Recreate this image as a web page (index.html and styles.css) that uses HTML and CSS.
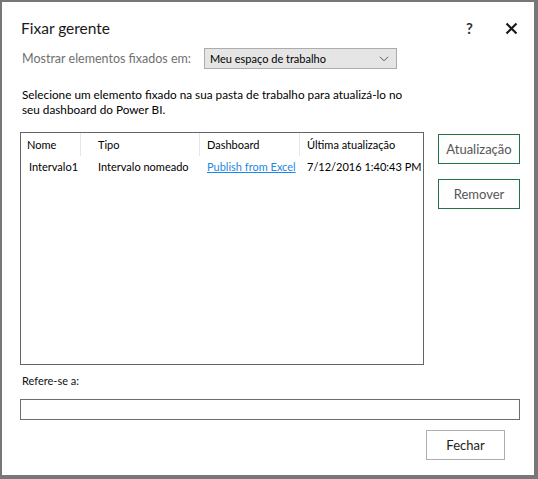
FILE: index.html
```html
<!DOCTYPE html>
<html lang="pt">
<head>
<meta charset="utf-8">
<link rel="stylesheet" href="styles.css">
</head>
<body>
<div class="window">
  <div class="titlebar">
    <div class="title">Fixar gerente</div>
    <div class="title-actions">
      <span class="help">?</span>
      <svg class="close" width="13" height="13" viewBox="0 0 13 13"><path d="M1.5 1.5 L11.5 11.5 M11.5 1.5 L1.5 11.5" stroke="#1a1a1a" stroke-width="2.2" fill="none"/></svg>
    </div>
  </div>
  <div class="filter-row">
    <span class="filter-label">Mostrar elementos fixados em:</span>
    <div class="select">
      <span>Meu espaço de trabalho</span>
      <svg width="10" height="6" viewBox="0 0 10 6"><path d="M1 0.8 L5 4.8 L9 0.8" stroke="#555" stroke-width="1" fill="none"/></svg>
    </div>
  </div>
  <p class="desc">Selecione um elemento fixado na sua pasta de trabalho para atualizá-lo no<br>seu dashboard do Power BI.</p>
  <div class="main">
    <div class="list">
      <div class="grid">
        <div class="th c1">Nome</div>
        <div class="th c2">Tipo</div>
        <div class="th c3">Dashboard</div>
        <div class="th c4">Última atualização</div>
        <div class="td c1 first">Intervalo1</div>
        <div class="td c2">Intervalo nomeado</div>
        <div class="td c3"><a class="link">Publish from Excel</a></div>
        <div class="td c4">7/12/2016 1:40:43 PM</div>
      </div>
    </div>
    <div class="side">
      <button class="btn green">Atualização</button>
      <button class="btn green">Remover</button>
    </div>
  </div>
  <div class="ref-label">Refere-se a:</div>
  <div class="ref-input"></div>
  <div class="footer">
    <button class="btn close-btn">Fechar</button>
  </div>
</div>
</body>
</html>
```

FILE: styles.css
```css
* { box-sizing: border-box; }
html, body { margin: 0; padding: 0; background: #fff; }
body { font-family: Lato, "Noto Sans", sans-serif; color: #111; }

.window {
  width: 538px;
  height: 479px;
  border-left: 2px solid #777;
  border-top: 2px solid #777;
  border-right: 4px solid #777;
  border-bottom: 4px solid #777;
  background: #fff;
  padding: 0 14px 0 18px;
  display: flex;
  flex-direction: column;
}

.titlebar {
  display: flex;
  align-items: center;
  justify-content: space-between;
  height: 22px;
  margin-top: 15px;
}
.title { font-size: 15.5px; color: #1a1a1a; padding-left: 1px; }
.title-actions { display: flex; align-items: center; gap: 32px; padding-right: 2px; }
.help { font-size: 15px; font-weight: 700; color: #333; }
.close { display: block; }

.filter-row {
  display: flex;
  align-items: center;
  margin-top: 9px;
  height: 21px;
  padding-left: 2px;
}
.filter-label { font-size: 12.5px; color: #707070; width: 182px; white-space: nowrap; }
.select {
  width: 193px;
  height: 21px;
  background: #e5e5e5;
  border: 1px solid #acacac;
  display: flex;
  align-items: center;
  justify-content: space-between;
  padding: 0 7px 0 5px;
  font-size: 11px;
  color: #000;
}

.desc {
  margin: 18px 0 0 2px;
  font-size: 11.75px;
  line-height: 15px;
  color: #000;
}

.main {
  display: flex;
  gap: 14px;
  margin-top: 15px;
}
.list {
  width: 404px;
  height: 233px;
  border: 1px solid #646464;
  background: #fff;
  overflow: hidden;
}
.grid {
  display: grid;
  grid-template-columns: 60px 119px 100px 1fr;
  grid-template-rows: 23px 20px;
  font-size: 11px;
  color: #000;
}
.th {
  display: flex;
  align-items: center;
  border-right: 1px solid #e6e6e6;
  white-space: nowrap;
}
.th.c4 { border-right: none; }
.td { display: flex; align-items: center; white-space: nowrap; overflow: hidden; }
.c1 { padding-left: 6px; }
.td.first { padding-left: 8px; }
.c2 { padding-left: 17px; }
.c3 { padding-left: 7px; }
.c4 { padding-left: 7px; }
.link { color: #1e88e5; text-decoration: underline; }

.side {
  display: flex;
  flex-direction: column;
  gap: 15px;
  padding-top: 2px;
}
.btn {
  font-family: inherit;
  background: #fff;
  height: 30px;
  font-size: 13px;
  padding: 0;
}
.btn.green {
  width: 82px;
  border: 1px solid #217346;
  color: #555;
}

.ref-label {
  margin-top: 8px;
  padding-left: 2px;
  font-size: 11px;
  line-height: 15px;
  color: #111;
}
.ref-input {
  margin-top: 11px;
  width: 500px;
  height: 21px;
  border: 1px solid #6d6d6d;
}
.footer {
  display: flex;
  justify-content: flex-end;
  width: 485px;
  margin-top: 10px;
}
.close-btn {
  width: 79px;
  border: 1px solid #adadad;
  color: #222;
}
```
